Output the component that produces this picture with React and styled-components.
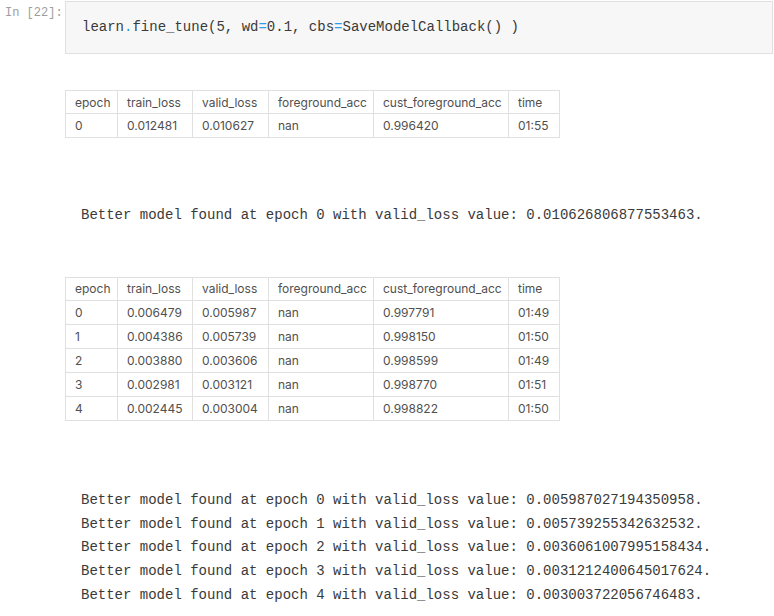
import React from "react";
import styled, { createGlobalStyle } from "styled-components";

const Global = createGlobalStyle`
  html, body { margin: 0; padding: 0; background: #fff; }
  body { width: 774px; height: 616px; overflow: hidden; }
`;

const Page = styled.div`
  display: flex;
  flex-direction: column;
`;

const InputRow = styled.div`
  display: flex;
  padding-top: 1px;
`;

const Prompt = styled.div`
  width: 60px;
  padding-left: 5px;
  padding-top: 4px;
  font-family: "Liberation Mono", monospace;
  font-size: 12px;
  line-height: 16px;
  color: #9e9e9e;
`;

const CodeBox = styled.div`
  flex: 1;
  height: 50px;
  display: flex;
  align-items: center;
  padding: 0 16px 1px;
  margin-right: 1px;
  background: #f7f7f7;
  border: 1px solid #e0e0e0;
  font-family: "Liberation Mono", monospace;
  font-size: 14px;
  color: #3a3a3a;
  white-space: pre;
`;

const Op = styled.span`
  color: #2e9be6;
`;

const Output = styled.div`
  padding-left: 65px;
  display: flex;
  flex-direction: column;
  align-items: flex-start;
`;

const Table = styled.table`
  border-collapse: collapse;
  margin-top: ${(p) => p.$mt}px;
  font-family: Inter, "Noto Sans", sans-serif;
  font-size: 12px;
  color: #505050;
  table-layout: fixed;
`;

const Th = styled.th`
  font-weight: 400;
  text-align: left;
  height: 23px;
  padding: 0 0 0 9px;
  border: 1px solid #e0e0e0;
  width: ${(p) => p.$w}px;
  box-sizing: border-box;
`;

const Td = styled.td`
  text-align: left;
  height: 23px;
  padding: 0 0 0 9px;
  border: 1px solid #e0e0e0;
  white-space: nowrap;
`;

const Stream = styled.div`
  margin-top: ${(p) => p.$mt}px;
  padding-left: 16px;
  font-family: "Liberation Mono", monospace;
  font-size: 14px;
  line-height: 23.75px;
  color: #3a3a3a;
  white-space: pre;
`;

const cols = [
  ["epoch", 52],
  ["train_loss", 75],
  ["valid_loss", 76],
  ["foreground_acc", 105],
  ["cust_foreground_acc", 135],
  ["time", 51],
];

const run1 = [["0", "0.012481", "0.010627", "nan", "0.996420", "01:55"]];
const run2 = [
  ["0", "0.006479", "0.005987", "nan", "0.997791", "01:49"],
  ["1", "0.004386", "0.005739", "nan", "0.998150", "01:50"],
  ["2", "0.003880", "0.003606", "nan", "0.998599", "01:49"],
  ["3", "0.002981", "0.003121", "nan", "0.998770", "01:51"],
  ["4", "0.002445", "0.003004", "nan", "0.998822", "01:50"],
];

const msgs2 = [
  ["0", "0.005987027194350958"],
  ["1", "0.005739255342632532"],
  ["2", "0.0036061007995158434"],
  ["3", "0.0031212400645017624"],
  ["4", "0.003003722056746483"],
];

function Metrics({ rows, mt }) {
  return (
    <Table $mt={mt}>
      <thead>
        <tr>
          {cols.map(([c, w]) => (
            <Th key={c} $w={w}>{c}</Th>
          ))}
        </tr>
      </thead>
      <tbody>
        {rows.map((r) => (
          <tr key={r[0]}>
            {r.map((v, i) => (
              <Td key={i}>{v}</Td>
            ))}
          </tr>
        ))}
      </tbody>
    </Table>
  );
}

export default function App() {
  return (
    <Page>
      <Global />
      <InputRow>
        <Prompt>In [22]:</Prompt>
        <CodeBox>
          learn<Op>.</Op>fine_tune(5, wd<Op>=</Op>0.1, cbs<Op>=</Op>SaveModelCallback() )
        </CodeBox>
      </InputRow>
      <Output>
        <Metrics rows={run1} mt={36} />
        <Stream $mt={66}>
          Better model found at epoch 0 with valid_loss value: 0.010626806877553463.
        </Stream>
        <Metrics rows={run2} mt={49} />
        <Stream $mt={68}>
          {msgs2.map(([e, v]) => `Better model found at epoch ${e} with valid_loss value: ${v}.`).join("\n")}
        </Stream>
      </Output>
    </Page>
  );
}
